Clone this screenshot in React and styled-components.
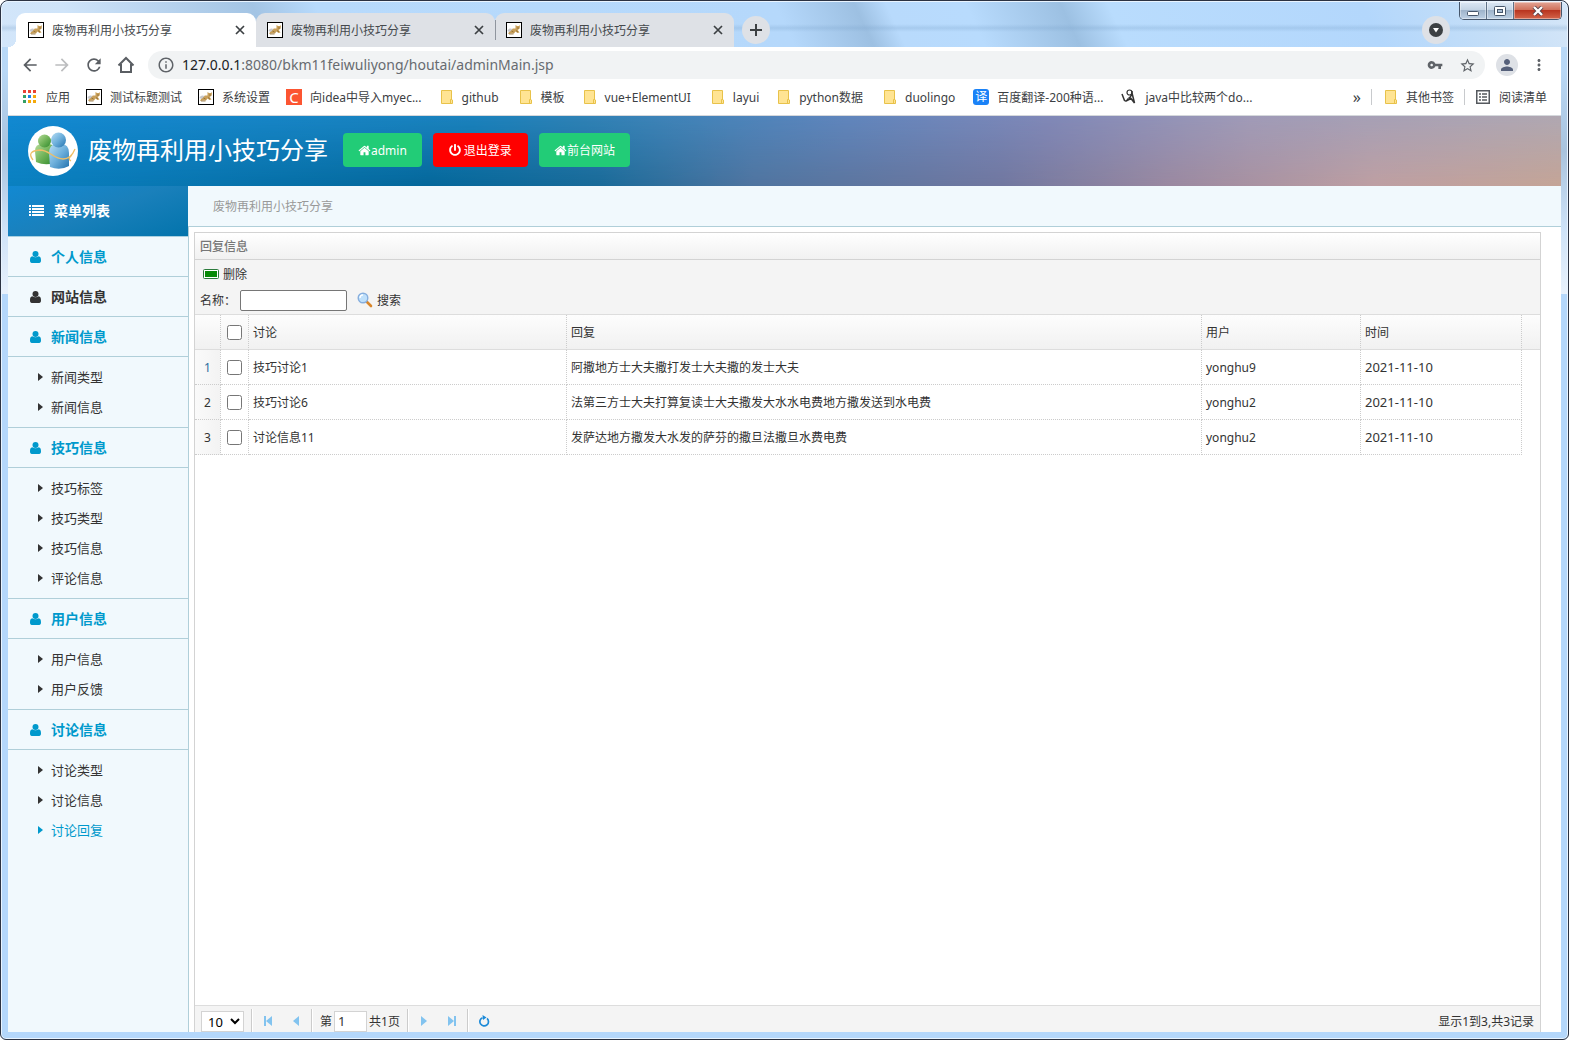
import React from "react";
import styled, { createGlobalStyle, css } from "styled-components";
import {
  MdArrowBack,
  MdArrowForward,
  MdRefresh,
  MdInfoOutline,
  MdVpnKey,
  MdStarBorder,
  MdPerson,
  MdMoreVert,
} from "react-icons/md";
import { FaPowerOff } from "react-icons/fa";

const GlobalStyle = createGlobalStyle`
  *, *::before, *::after { box-sizing: border-box; }
  body {
    margin: 0;
    background: #fff;
    color: #333;
    font: 12px/20px "Noto Sans", "Noto Sans CJK SC", sans-serif;
  }
  button, input, select { font: inherit; color: inherit; margin: 0; }
  button { border: 0; padding: 0; background: none; cursor: pointer; }
  a { color: inherit; text-decoration: none; }
  ul { list-style: none; margin: 0; padding: 0; }
  svg { display: block; flex: none; }
`;

const Label = styled.span`
  padding-top: 2px;
  white-space: nowrap;
`;

/* ---------- window frame ---------- */

const Window = styled.div`
  display: flex;
  flex-direction: column;
  height: 100vh;
  padding: 0 7px 7px;
  border: 1px solid #2b3242;
  border-radius: 8px 8px 6px 6px;
  box-shadow: inset 0 0 0 1px #e9f4ff;
  background:
    linear-gradient(180deg, transparent 0, transparent 293px, #b4d7fb 293px),
    linear-gradient(180deg, #b9dafa 0, #b9d8f6 70px, #a9c3dd 150px, #cfe3f8 230px, #e8f1fc 292px);
`;

const TitleBar = styled.header`
  display: flex;
  align-items: flex-end;
  flex: none;
  height: 46px;
  margin: 0 -6px;
  padding: 0 5px 0 14px;
  border-top: 1px solid #e9f4ff;
  border-radius: 7px 7px 0 0;
  background:
    linear-gradient(180deg, transparent 22px, rgba(120, 160, 200, 0.28) 26px, transparent 30px),
    linear-gradient(65deg, #d3e6fa 0, #cfe4f9 5%, #a3c4e4 17%, #b7dafc 21%, #b5d8fb 50%, #9dc0e2 55%,
      #b8dafc 57%, #b8dbfd 62%, #9cc0e2 68%, #b9dcfd 71%, #b3d7fc 87%, #c6dff7 95%, #d5e6f8 100%);
`;

const Tab = styled.div`
  position: relative;
  display: flex;
  align-items: center;
  gap: 8px;
  width: 239px;
  height: 34px;
  padding: 0 9px 0 11px;
  border-radius: 9px 9px 0 0;
  background: ${(p) => (p.$active ? "#fff" : "#dee1e6")};
  color: #45494d;
  ${(p) => p.$active && css`
    width: 240px;
    padding-left: 12px;
    &::before {
      content: "";
      position: absolute;
      left: -8px;
      bottom: 0;
      width: 8px;
      height: 8px;
      background: radial-gradient(circle at 0 0, transparent 8px, #fff 8px);
    }
  `}
  ${(p) => p.$divided && css`
    &::after {
      content: "";
      position: absolute;
      left: 0;
      top: 7px;
      width: 1px;
      height: 20px;
      background: #8f959e;
    }
  `}
`;

const TabTitle = styled(Label)`
  flex: 1;
`;

const TabClose = styled.button`
  display: grid;
  place-items: center;
  width: 14px;
  height: 16px;
  color: #3c4043;
`;

const RoundButton = styled.button`
  display: grid;
  place-items: center;
  align-self: flex-end;
  width: 28px;
  height: 28px;
  margin: 0 0 3px 8px;
  border-radius: 50%;
  background: #dee1e6;
  color: #3c4043;
`;

const Spacer = styled.div`
  flex: 1;
`;

const CaptionButtons = styled.div`
  display: flex;
  align-self: flex-start;
  height: 18px;
  margin-left: 9px;
  border: 1px solid #46566b;
  border-top: 0;
  border-radius: 0 0 5px 5px;
  overflow: hidden;
`;

const Caption = styled.button`
  display: grid;
  place-items: center;
  width: ${(p) => (p.$close ? 47 : 27)}px;
  border-right: ${(p) => (p.$close ? 0 : 1)}px solid #5f7187;
  box-shadow: inset 0 0 0 1px rgba(255, 255, 255, 0.4);
  background: ${(p) => (p.$close
    ? "linear-gradient(#e3a596, #cf6e58 48%, #b93520 50%, #d4654a)"
    : "linear-gradient(#dce8f5, #c3d3e4 48%, #9fb4cb 50%, #bdd0e4)")};
`;

const BrowserBody = styled.div`
  display: flex;
  flex-direction: column;
  flex: 1;
  min-height: 0;
  background: #fff;
`;

const NavBar = styled.div`
  display: flex;
  align-items: center;
  flex: none;
  height: 36px;
  padding: 0 13px 0 12px;
`;

const NavButton = styled.button`
  display: grid;
  place-items: center;
  width: 20px;
  height: 20px;
  margin-right: 12px;
  color: ${(p) => (p.$dim ? "#bcbdbf" : "#5a5e63")};
`;

const OmniBox = styled.div`
  display: flex;
  align-items: center;
  flex: 1;
  gap: 7px;
  height: 28px;
  padding: 0 9px;
  border-radius: 14px;
  background: #f1f3f4;
  color: #5f6368;
`;

const Address = styled.div`
  flex: 1;
  font-size: 14px;
  color: #676b70;
  b { font-weight: 400; color: #202124; }
`;

const OmniActions = styled.div`
  display: flex;
  gap: 16px;
`;

const Avatar = styled.button`
  display: grid;
  place-items: center;
  width: 22px;
  height: 22px;
  margin: 0 12px 0 11px;
  border-radius: 50%;
  background: #dee1e6;
  color: #55607a;
`;

const Bookmarks = styled.nav`
  display: flex;
  align-items: center;
  flex: none;
  gap: 16px;
  height: 33px;
  padding: 0 14px 4px;
  border-bottom: 1px solid #d5d8dc;
  color: #3c4043;
  white-space: nowrap;
`;

const Bookmark = styled.a`
  display: flex;
  align-items: center;
  gap: 8px;
  padding-right: ${(p) => (p.$latin ? 2 : 0)}px;
`;

const BookmarkEnd = styled.div`
  display: flex;
  align-items: center;
  gap: 10px;
`;

const More = styled.span`
  font-size: 16px;
  line-height: 16px;
`;

const Rule = styled.span`
  width: 1px;
  height: 16px;
  background: #c8cacd;
`;

const Badge = styled.span`
  display: grid;
  place-items: center;
  width: 16px;
  height: 16px;
  border-radius: ${(p) => (p.$round ? 3 : 0)}px;
  background: ${(p) => p.$color};
  color: #fff;
  font-size: ${(p) => (p.$round ? 12 : 15)}px;
  line-height: 16px;
`;

/* ---------- admin page ---------- */

const Banner = styled.header`
  position: relative;
  display: flex;
  align-items: center;
  flex: none;
  height: 70px;
  padding-left: 20px;
  color: #fff;
  background: linear-gradient(90deg, #1289d2 0, #1b82bd 30%, #2f82b6 37%, #6086bd 54%, #8088b8 67%, #a09bb8 80%, #b0a8b2 100%);
  &::before {
    content: "";
    position: absolute;
    inset: 0;
    background: linear-gradient(90deg, #0a80c0 0, #04679a 27%, #196a98 38%, #50749f 48%, #71779f 64%, #9b89a0 75%, #be9fa2 88%, #c4a496 100%);
    mask-image: linear-gradient(#0000, #000);
  }
  > * { position: relative; }
`;

const SiteTitle = styled.h1`
  margin: 0 15px 2px 10px;
  font-size: 24px;
  line-height: 36px;
  font-weight: 400;
`;

const BannerButton = styled.button`
  display: flex;
  align-items: center;
  justify-content: center;
  gap: ${(p) => (p.$danger ? 3 : 0)}px;
  height: 34px;
  margin: 0 11px 2px 0;
  padding: 0 ${(p) => (p.$danger ? 16 : 15)}px;
  border-radius: 4px;
  background: ${(p) => (p.$danger ? "#ff0000" : "#22cc77")};
  color: #fff;
`;

const Columns = styled.div`
  display: flex;
  flex: 1;
  min-height: 0;
`;

const Sidebar = styled.aside`
  flex: none;
  width: 181px;
  border-right: 1px solid #b0cfd9;
  background: #f1f9fd;
`;

const MenuTitle = styled.h2`
  display: flex;
  align-items: center;
  gap: 10px;
  height: 51px;
  margin: 0;
  padding-left: 21px;
  border-bottom: 1px solid #a9d0e0;
  background: linear-gradient(160deg, #1289d2, #1a80bb 50%, #0374ac);
  color: #fff;
  font-size: 14px;
`;

const Group = styled.a`
  display: flex;
  align-items: center;
  gap: 9px;
  height: 40px;
  padding-left: 21px;
  border-bottom: 1px solid #b0cfd9;
  color: ${(p) => (p.$dark ? "#333" : "#0099cc")};
  font-size: 14px;
  font-weight: 700;
`;

const SubList = styled.ul`
  padding: 5px 0;
  border-bottom: ${(p) => (p.$last ? 0 : 1)}px solid #b0cfd9;
`;

const SubItem = styled.a`
  display: flex;
  align-items: center;
  gap: 8px;
  height: 30px;
  padding-left: 30px;
  color: ${(p) => (p.$active ? "#0099cc" : "#333")};
  font-size: 13px;
`;

const Main = styled.main`
  display: flex;
  flex-direction: column;
  flex: 1;
  min-width: 0;
`;

const Breadcrumb = styled.div`
  flex: none;
  height: 41px;
  margin-left: -1px;
  padding-left: 25px;
  border-bottom: 1px solid #b0cfd9;
  background: #f1f9fd;
  color: #999;
  line-height: 42px;
`;

const Panel = styled.section`
  display: flex;
  flex-direction: column;
  flex: 1;
  min-height: 0;
  margin: 5px 20px 0 5px;
  border: 1px solid #d3d3d3;
  border-bottom: 0;
`;

const PanelTitle = styled.h3`
  height: 27px;
  margin: 0;
  padding-left: 5px;
  border-bottom: 1px solid #d3d3d3;
  background: linear-gradient(#fff, #f1f1f1);
  color: #777;
  font-size: 12px;
  font-weight: 500;
  line-height: 28px;
`;

const Toolbar = styled.div`
  height: 55px;
  padding: 1px 5px 0;
  border-bottom: 1px solid #ddd;
  background: #f4f4f4;
`;

const ToolRow = styled.div`
  display: flex;
  align-items: center;
  height: 26px;
`;

const ToolButton = styled.button`
  display: flex;
  align-items: center;
  gap: 4px;
  padding: 0 3px;
`;

const SearchInput = styled.input`
  width: 107px;
  height: 21px;
  margin: 0 7px 0 4px;
  padding: 1px 2px;
  border: 1px solid #767676;
  border-radius: 2px;
  background: #fff;
`;

const GridBody = styled.div`
  flex: 1;
  min-height: 0;
  overflow: hidden;
`;

const Grid = styled.table`
  width: 100%;
  table-layout: fixed;
  border-collapse: separate;
  border-spacing: 0;
  th, td {
    height: 35px;
    padding: 2px 4px 0;
    border-right: 1px dotted #ccc;
    text-align: left;
    font-weight: 400;
    white-space: nowrap;
    overflow: hidden;
  }
  th { border-bottom: 1px solid #ddd; background: linear-gradient(#fdfdfd, #f1f1f1); }
  td { border-bottom: 1px dotted #ccc; }
  th:last-child, td:last-child { border-right: 0; }
  td:last-child { border-bottom: 0; }
  td.date { padding-top: 0; font-size: 13px; }
`;

const RowNumber = styled.td`
  background: linear-gradient(90deg, #fafafa, #f3f3f3);
  text-align: center !important;
  color: ${(p) => (p.$current ? "#2a6d9e" : "#333")};
`;

const Tick = styled.input`
  display: block;
  width: 15px;
  height: 15px;
  margin: 0 2px 2px;
`;

const Pager = styled.footer`
  display: flex;
  align-items: center;
  flex: none;
  height: 27px;
  padding: 4px 6px 0;
  border-top: 1px solid #ddd;
  background: #f4f4f4;
  overflow: hidden;
`;

const PageSize = styled.select`
  width: 43px;
  height: 21px;
  margin-right: 2px;
  padding: 0 0 0 2px;
  border: 1px solid #d3d3d3;
  background: #fff;
  font-size: 13px;
  line-height: 19px;
  color: #000;
`;

const PagerRule = styled.span`
  width: 2px;
  height: 24px;
  margin: 0 5px;
  border-left: 1px solid #ccc;
  border-right: 1px solid #fff;
`;

const PagerButton = styled.button`
  display: grid;
  place-items: center;
  width: 20px;
  height: 20px;
  margin-right: ${(p) => (p.$spaced ? 8 : 0)}px;
`;

const PageInput = styled.input`
  width: 33px;
  height: 21px;
  margin: 0 2px;
  padding: 0 3px;
  border: 1px solid #d3d3d3;
  background: #fff;
  font-size: 13px;
`;

const PageJump = styled.label`
  display: flex;
  align-items: center;
  padding: 0 2px;
`;

/* ---------- drawings ---------- */

const Favicon = () => (
  <svg width="16" height="16" viewBox="0 0 16 16" aria-hidden="true">
    <rect x=".5" y=".5" width="15" height="15" fill="#fff" stroke="#000" />
    <path d="M4 8l3-1.500 2.500 0L9.500 3l1.500 1h2l1-1-.3 3.500-2 1.500 1.800 2.500-2 .5-2-1.500-1.500 2-3 0-3 .5z" fill="#c9a05a" />
    <path d="M1.500 9c1-3 4-3 5-1.500L3.500 10z" fill="#c8c8cc" />
    <path d="M3 12h4.500M5.500 9l2 1M11 6h2M10 8.500l2 1.500" stroke="#8a6a35" strokeWidth=".8" />
  </svg>
);

const AppsIcon = () => {
  const colors = ["#ea4335", "#ea4335", "#ea4335", "#34a065", "#1a83e8", "#f4a90b", "#34a065", "#f4a90b", "#f4a90b"];
  return (
    <svg width="16" height="16" viewBox="0 0 16 16" aria-hidden="true">
      {colors.map((c, i) => (
        <rect key={i} x={1 + (i % 3) * 5} y={1 + Math.floor(i / 3) * 5} width="3" height="3" fill={c} />
      ))}
    </svg>
  );
};

const Folder = () => (
  <svg width="16" height="16" viewBox="0 0 16 16" aria-hidden="true">
    <path d="M3.500 1.500h10v9l1 .5v3.500h-11z" fill="#ffe493" stroke="#e8c24a" />
    <path d="M12.500 14v-3.500h1.500" fill="none" stroke="#e8c24a" />
  </svg>
);

const CatIcon = () => (
  <svg width="16" height="16" viewBox="0 0 16 16" fill="none" stroke="#333" aria-hidden="true">
    <circle cx="8.500" cy="3.500" r="2.500" strokeWidth="1.200" />
    <path d="M1 5l2.500 6.500c1.500 1 3 0 3.500-2M11 2c0 3-1 6-3.500 7.500M11 4l2.500 10-3.500-4.500-5 2.500" strokeWidth="1.500" />
  </svg>
);

const ReadingIcon = () => (
  <svg width="16" height="16" viewBox="0 0 16 16" fill="none" stroke="#55595e" aria-hidden="true">
    <rect x="1.750" y="1.750" width="12.500" height="12.500" strokeWidth="1.500" />
    <path d="M4 5h2M7 5h5M4 8h2M7 8h5M4 11h2M7 11h5" strokeWidth="1.500" />
  </svg>
);

const HouseIcon = () => (
  <svg width="20" height="20" viewBox="0 0 20 20" fill="none" stroke="currentColor" aria-hidden="true">
    <path d="M2.500 10.500L10 3l7.500 7.500M5 9v8h10V9" strokeWidth="2" />
  </svg>
);

const CrossIcon = () => (
  <svg width="10" height="10" viewBox="0 0 10 10" stroke="currentColor" strokeWidth="1.700" aria-hidden="true">
    <path d="M1 1l8 8M9 1l-8 8" />
  </svg>
);

const PlusIcon = () => (
  <svg width="12" height="12" viewBox="0 0 12 12" fill="currentColor" aria-hidden="true">
    <path d="M5 0h2v5h5v2H7v5H5V7H0V5h5z" />
  </svg>
);

const Logo = () => (
  <svg width="50" height="50" viewBox="0 0 50 50" aria-hidden="true">
    <defs>
      <linearGradient id="green" x2="1" y2="1">
        <stop stopColor="#b6dc9a" /><stop offset=".5" stopColor="#72b45a" /><stop offset="1" stopColor="#2f8a2c" />
      </linearGradient>
      <linearGradient id="blue" x2="1" y2="1">
        <stop stopColor="#b9def4" /><stop offset=".5" stopColor="#6eb0dc" /><stop offset="1" stopColor="#2272ae" />
      </linearGradient>
    </defs>
    <circle cx="25" cy="25" r="25" fill="#fff" />
    <path d="M7 25q0-7 7-7h7q5 0 5 6v13q-9 3-18-1z" fill="url(#green)" />
    <circle cx="16.500" cy="15" r="6.500" fill="url(#green)" />
    <path d="M21 27q0-9 8-9h4q8 0 8 9v13q-9 5-19 1z" fill="url(#blue)" />
    <circle cx="30.500" cy="14" r="7.500" fill="url(#blue)" />
    <path d="M5 34q-7-9 7-10c9 0 14 9 23 9q8 0 12-10M43 35q-4-2 1-6" fill="none" stroke="#eebf67" strokeWidth="1.300" />
  </svg>
);

const HomeGlyph = () => (
  <svg width="13" height="13" viewBox="0 0 1792 1792" fill="currentColor" aria-hidden="true">
    <path d="M1472 992v480q0 26-19 45t-45 19h-384v-384h-256v384h-384q-26 0-45-19t-19-45v-480q0-1 .5-3t.5-3l575-474 575 474q1 2 1 6zm223-69l-62 74q-8 9-21 11h-3q-13 0-21-7l-692-577-692 577q-12 8-24 7-13-2-21-11l-62-74q-8-10-7-23.500t11-21.500l719-599q32-26 76-26t76 26l244 204v-195q0-14 9-23t23-9h192q14 0 23 9t9 23v408l219 182q10 8 11 21.500t-7 23.500z" />
  </svg>
);

const UserGlyph = () => (
  <svg width="13" height="12" viewBox="0 0 13 12" fill="currentColor" aria-hidden="true">
    <circle cx="6.500" cy="3" r="3" />
    <path d="M3.300 5.200C1.500 5.400 1 7 1 9.500 1 11 1.600 12 2.800 12h7.400C11.400 12 12 11 12 9.500c0-2.500-.5-4.100-2.300-4.300-1.800 1.500-4.600 1.500-6.400 0z" />
  </svg>
);

const ListGlyph = () => (
  <svg width="15" height="12" viewBox="0 0 15 12" fill="currentColor" aria-hidden="true">
    <path d="M0 0h2v2H0zM3 0h12v2H3zM0 3h2v2H0zM3 3h12v2H3zM0 6h2v2H0zM3 6h12v2H3zM0 9h2v2H0zM3 9h12v2H3z" />
  </svg>
);

const Caret = () => (
  <svg width="5" height="8" viewBox="0 0 5 8" fill="currentColor" aria-hidden="true">
    <path d="M0 0l5 4-5 4z" />
  </svg>
);

const MinusIcon = () => (
  <svg width="16" height="16" viewBox="0 0 16 16" aria-hidden="true">
    <rect x=".5" y="3.500" width="15" height="9" rx="1" fill="#fff" stroke="#2b7a3b" />
    <rect x="2" y="5" width="12" height="6" fill="#078a07" />
  </svg>
);

const SearchIcon = () => (
  <svg width="16" height="16" viewBox="0 0 16 16" aria-hidden="true">
    <path d="M9.500 9.500l4.500 4.500" stroke="#d9862b" strokeWidth="2.600" strokeLinecap="round" />
    <circle cx="6" cy="6" r="4.800" fill="#bfe0fb" stroke="#86aede" strokeWidth="1.400" />
    <path d="M3 6q0-3 3-3.200" stroke="#fff" strokeWidth="1.300" fill="none" />
  </svg>
);

const PageArrow = ({ back, edge }) => (
  <svg width="10" height="10" viewBox="0 0 10 10" fill="#82c3ef" transform={back ? undefined : "rotate(180)"} aria-hidden="true">
    <path d={edge ? "M9 0v10L3 5z" : "M8 0v10L2 5z"} />
    {edge && <rect x="1" width="2" height="10" />}
  </svg>
);

const ReloadIcon = () => (
  <svg width="12" height="12" viewBox="0 0 12 12" aria-hidden="true">
    <path d="M9 3.400A4.300 4.300 0 1 1 4.500 2.700" fill="none" stroke="#1c8ad8" strokeWidth="1.700" />
    <path d="M4.500 0l4 2.500-3.500 2.500z" fill="#1c8ad8" />
  </svg>
);

/* ---------- data ---------- */

const SITE = "废物再利用小技巧分享";

const bookmarks = [
  { icon: <AppsIcon />, label: "应用" },
  { icon: <Favicon />, label: "测试标题测试" },
  { icon: <Favicon />, label: "系统设置" },
  { icon: <Badge $color="#fc5531">C</Badge>, label: "向idea中导入myec..." },
  { icon: <Folder />, label: "github", latin: true },
  { icon: <Folder />, label: "模板" },
  { icon: <Folder />, label: "vue+ElementUI", latin: true },
  { icon: <Folder />, label: "layui" },
  { icon: <Folder />, label: "python数据", latin: true },
  { icon: <Folder />, label: "duolingo", latin: true },
  { icon: <Badge $round $color="#1a82f7">译</Badge>, label: "百度翻译-200种语...", latin: true },
  { icon: <CatIcon />, label: "java中比较两个do..." },
];

const menu = [
  { name: "个人信息" },
  { name: "网站信息", dark: true },
  { name: "新闻信息", items: ["新闻类型", "新闻信息"] },
  { name: "技巧信息", items: ["技巧标签", "技巧类型", "技巧信息", "评论信息"] },
  { name: "用户信息", items: ["用户信息", "用户反馈"] },
  { name: "讨论信息", items: ["讨论类型", "讨论信息", "讨论回复"], active: "讨论回复" },
];

const rows = [
  ["技巧讨论1", "阿撒地方士大夫撒打发士大夫撒的发士大夫", "yonghu9", "2021-11-10"],
  ["技巧讨论6", "法第三方士大夫打算复读士大夫撒发大水水电费地方撒发送到水电费", "yonghu2", "2021-11-10"],
  ["讨论信息11", "发萨达地方撒发大水发的萨芬的撒旦法撒旦水费电费", "yonghu2", "2021-11-10"],
];

/* ---------- sections ---------- */

const BrowserTab = (props) => (
  <Tab {...props}>
    <Favicon />
    <TabTitle>{SITE}</TabTitle>
    <TabClose aria-label="关闭"><CrossIcon /></TabClose>
  </Tab>
);

const Chrome = () => (
  <TitleBar>
    <BrowserTab $active />
    <BrowserTab />
    <BrowserTab $divided />
    <RoundButton aria-label="新标签页"><PlusIcon /></RoundButton>
    <Spacer />
    <RoundButton aria-label="搜索标签页">
      <svg width="14" height="14" viewBox="0 0 14 14" aria-hidden="true">
        <circle cx="7" cy="7" r="7" fill="#3c4043" />
        <path d="M4 5h6l-3 4.500z" fill="#fff" />
      </svg>
    </RoundButton>
    <CaptionButtons>
      <Caption aria-label="最小化">
        <svg width="12" height="10" viewBox="0 0 12 10"><rect x=".5" y="5.500" width="11" height="4" rx="1" fill="#fff" stroke="#46566b" /></svg>
      </Caption>
      <Caption aria-label="还原">
        <svg width="12" height="10" viewBox="0 0 12 10"><rect x=".5" y=".5" width="11" height="9" rx="1" fill="#fff" stroke="#46566b" /><rect x="3.500" y="3.500" width="5" height="3" fill="#a9bdd3" stroke="#46566b" /></svg>
      </Caption>
      <Caption $close aria-label="关闭">
        <svg width="12" height="10" viewBox="0 0 12 10"><path d="M2 1l8 8M10 1l-8 8" stroke="#5a4148" strokeWidth="4" /><path d="M2 1l8 8M10 1l-8 8" stroke="#fff" strokeWidth="2.400" /></svg>
      </Caption>
    </CaptionButtons>
  </TitleBar>
);

const Navigation = () => (
  <NavBar>
    <NavButton aria-label="后退"><MdArrowBack size={20} /></NavButton>
    <NavButton $dim aria-label="前进"><MdArrowForward size={20} /></NavButton>
    <NavButton aria-label="重新加载"><MdRefresh size={20} /></NavButton>
    <NavButton aria-label="主页"><HouseIcon /></NavButton>
    <OmniBox>
      <MdInfoOutline size={18} />
      <Address><b>127.0.0.1</b>:8080/bkm11feiwuliyong/houtai/adminMain.jsp</Address>
      <OmniActions>
        <MdVpnKey size={16} />
        <MdStarBorder size={17} />
      </OmniActions>
    </OmniBox>
    <Avatar aria-label="用户"><MdPerson size={18} /></Avatar>
    <MdMoreVert size={18} color="#5f6368" />
  </NavBar>
);

const BookmarkBar = () => (
  <Bookmarks>
    {bookmarks.map(({ icon, label, latin }) => (
      <Bookmark href="#" key={label} $latin={latin}>{icon}<Label>{label}</Label></Bookmark>
    ))}
    <Spacer />
    <BookmarkEnd>
      <More>»</More>
      <Rule />
      <Bookmark href="#"><Folder /><Label>其他书签</Label></Bookmark>
      <Rule />
      <Bookmark href="#"><ReadingIcon /><Label>阅读清单</Label></Bookmark>
    </BookmarkEnd>
  </Bookmarks>
);

const Menu = () => (
  <Sidebar>
    <MenuTitle><ListGlyph />菜单列表</MenuTitle>
    {menu.map((group, i) => (
      <div key={group.name}>
        <Group href="#" $dark={group.dark}><UserGlyph />{group.name}</Group>
        {group.items && (
          <SubList $last={i === menu.length - 1}>
            {group.items.map((item) => (
              <li key={item}>
                <SubItem href="#" $active={item === group.active}><Caret />{item}</SubItem>
              </li>
            ))}
          </SubList>
        )}
      </div>
    ))}
  </Sidebar>
);

const ReplyGrid = () => (
  <Grid>
    <colgroup>
      <col width="26" />
      <col width="28" />
      <col width="318" />
      <col />
      <col width="159" />
      <col width="161" />
      <col width="18" />
    </colgroup>
    <thead>
      <tr>
        <th />
        <th><Tick type="checkbox" aria-label="全选" /></th>
        <th>讨论</th>
        <th>回复</th>
        <th>用户</th>
        <th>时间</th>
        <th />
      </tr>
    </thead>
    <tbody>
      {rows.map(([topic, reply, user, date], i) => (
        <tr key={topic}>
          <RowNumber $current={i === 0}>{i + 1}</RowNumber>
          <td><Tick type="checkbox" aria-label={topic} /></td>
          <td>{topic}</td>
          <td>{reply}</td>
          <td>{user}</td>
          <td className="date">{date}</td>
          <td />
        </tr>
      ))}
    </tbody>
  </Grid>
);

export default function App() {
  return (
    <>
      <GlobalStyle />
      <Window>
        <Chrome />
        <BrowserBody>
          <Navigation />
          <BookmarkBar />
          <Banner>
            <Logo />
            <SiteTitle>{SITE}</SiteTitle>
            <BannerButton><HomeGlyph /><Label>admin</Label></BannerButton>
            <BannerButton $danger><FaPowerOff size={12} /><Label>退出登录</Label></BannerButton>
            <BannerButton><HomeGlyph /><Label>前台网站</Label></BannerButton>
          </Banner>
          <Columns>
            <Menu />
            <Main>
              <Breadcrumb>{SITE}</Breadcrumb>
              <Panel>
                <PanelTitle>回复信息</PanelTitle>
                <Toolbar>
                  <ToolRow><ToolButton><MinusIcon /><Label>删除</Label></ToolButton></ToolRow>
                  <ToolRow>
                    <Label as="label" htmlFor="name">名称：</Label>
                    <SearchInput id="name" />
                    <ToolButton><SearchIcon /><Label>搜索</Label></ToolButton>
                  </ToolRow>
                </Toolbar>
                <GridBody><ReplyGrid /></GridBody>
                <Pager>
                  <PageSize aria-label="每页条数" defaultValue="10"><option>10</option><option>20</option></PageSize>
                  <PagerRule />
                  <PagerButton $spaced aria-label="首页"><PageArrow back edge /></PagerButton>
                  <PagerButton aria-label="上一页"><PageArrow back /></PagerButton>
                  <PagerRule />
                  <PageJump>
                    <Label>第</Label>
                    <PageInput defaultValue="1" />
                    <Label>共1页</Label>
                  </PageJump>
                  <PagerRule />
                  <PagerButton $spaced aria-label="下一页"><PageArrow /></PagerButton>
                  <PagerButton aria-label="末页"><PageArrow edge /></PagerButton>
                  <PagerRule />
                  <PagerButton aria-label="刷新"><ReloadIcon /></PagerButton>
                  <Spacer />
                  <Label>显示1到3,共3记录</Label>
                </Pager>
              </Panel>
            </Main>
          </Columns>
        </BrowserBody>
      </Window>
    </>
  );
}
